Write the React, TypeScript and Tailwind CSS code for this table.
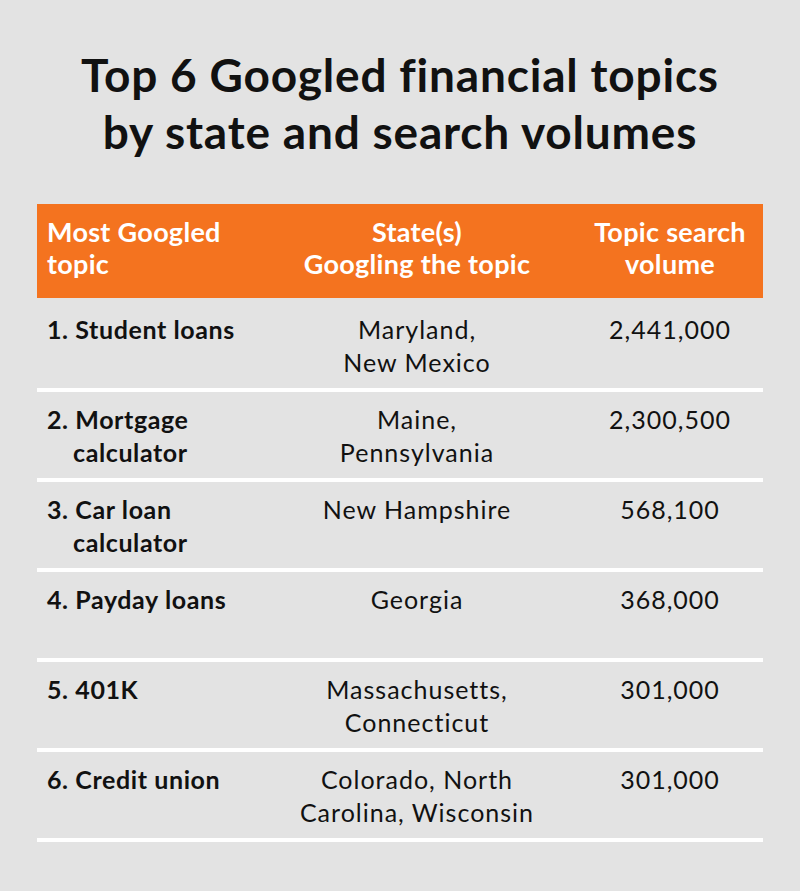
import React from 'react';

interface TopicRow {
    topic: string[];
    states: string[];
    volume: string;
}

const ROWS: TopicRow[] = [
    { topic: ['1. Student loans'], states: ['Maryland,', 'New Mexico'], volume: '2,441,000' },
    { topic: ['2. Mortgage', 'calculator'], states: ['Maine,', 'Pennsylvania'], volume: '2,300,500' },
    { topic: ['3. Car loan', 'calculator'], states: ['New Hampshire'], volume: '568,100' },
    { topic: ['4. Payday loans'], states: ['Georgia'], volume: '368,000' },
    { topic: ['5. 401K'], states: ['Massachusetts,', 'Connecticut'], volume: '301,000' },
    { topic: ['6. Credit union'], states: ['Colorado, North', 'Carolina, Wisconsin'], volume: '301,000' },
];

const Lines: React.FC<{ lines: string[] }> = ({ lines }) => (
    <>
        {lines.map((line, i) => (
            <React.Fragment key={i}>
                {i > 0 && <br />}
                {line}
            </React.Fragment>
        ))}
    </>
);

const App: React.FC = () => {
    return (
        <div className="min-h-screen w-full bg-[#e3e3e3] font-['Lato','Liberation_Sans',sans-serif] text-[#111]">
            <h1 className="pt-[46px] text-center text-[46px] font-bold leading-[57px] tracking-[0.8px]">
                Top 6 Googled financial topics
                <br />
                by state and search volumes
            </h1>

            <div className="mx-auto mt-[44px] w-[726px]">
                {/* header band */}
                <div className="grid h-[94px] grid-cols-[250px_260px_216px] bg-[#f4731f] pt-[12px] text-[27px] font-bold leading-[32px] tracking-[0.3px] text-white">
                    <div className="pl-[10px]">Most Googled<br />topic</div>
                    <div className="text-center">State(s)<br />Googling the topic</div>
                    <div className="pl-[30px] text-center">Topic search<br />volume</div>
                </div>

                {ROWS.map((row, i) => (
                    <div
                        key={i}
                        className={`grid h-[90px] grid-cols-[250px_260px_216px] border-t-4 pt-[11px] text-[25px] leading-[33px] tracking-[1px] ${i === 0 ? 'border-transparent' : 'border-white'}`}
                    >
                        <div className="pl-[36px] -indent-[26px] font-bold tracking-[0.6px]">
                            <Lines lines={row.topic} />
                        </div>
                        <div className="text-center">
                            <Lines lines={row.states} />
                        </div>
                        <div className="pl-[30px] text-center">{row.volume}</div>
                    </div>
                ))}
                <div className="h-[4px] bg-white" />
            </div>
        </div>
    );
};

export default App;
